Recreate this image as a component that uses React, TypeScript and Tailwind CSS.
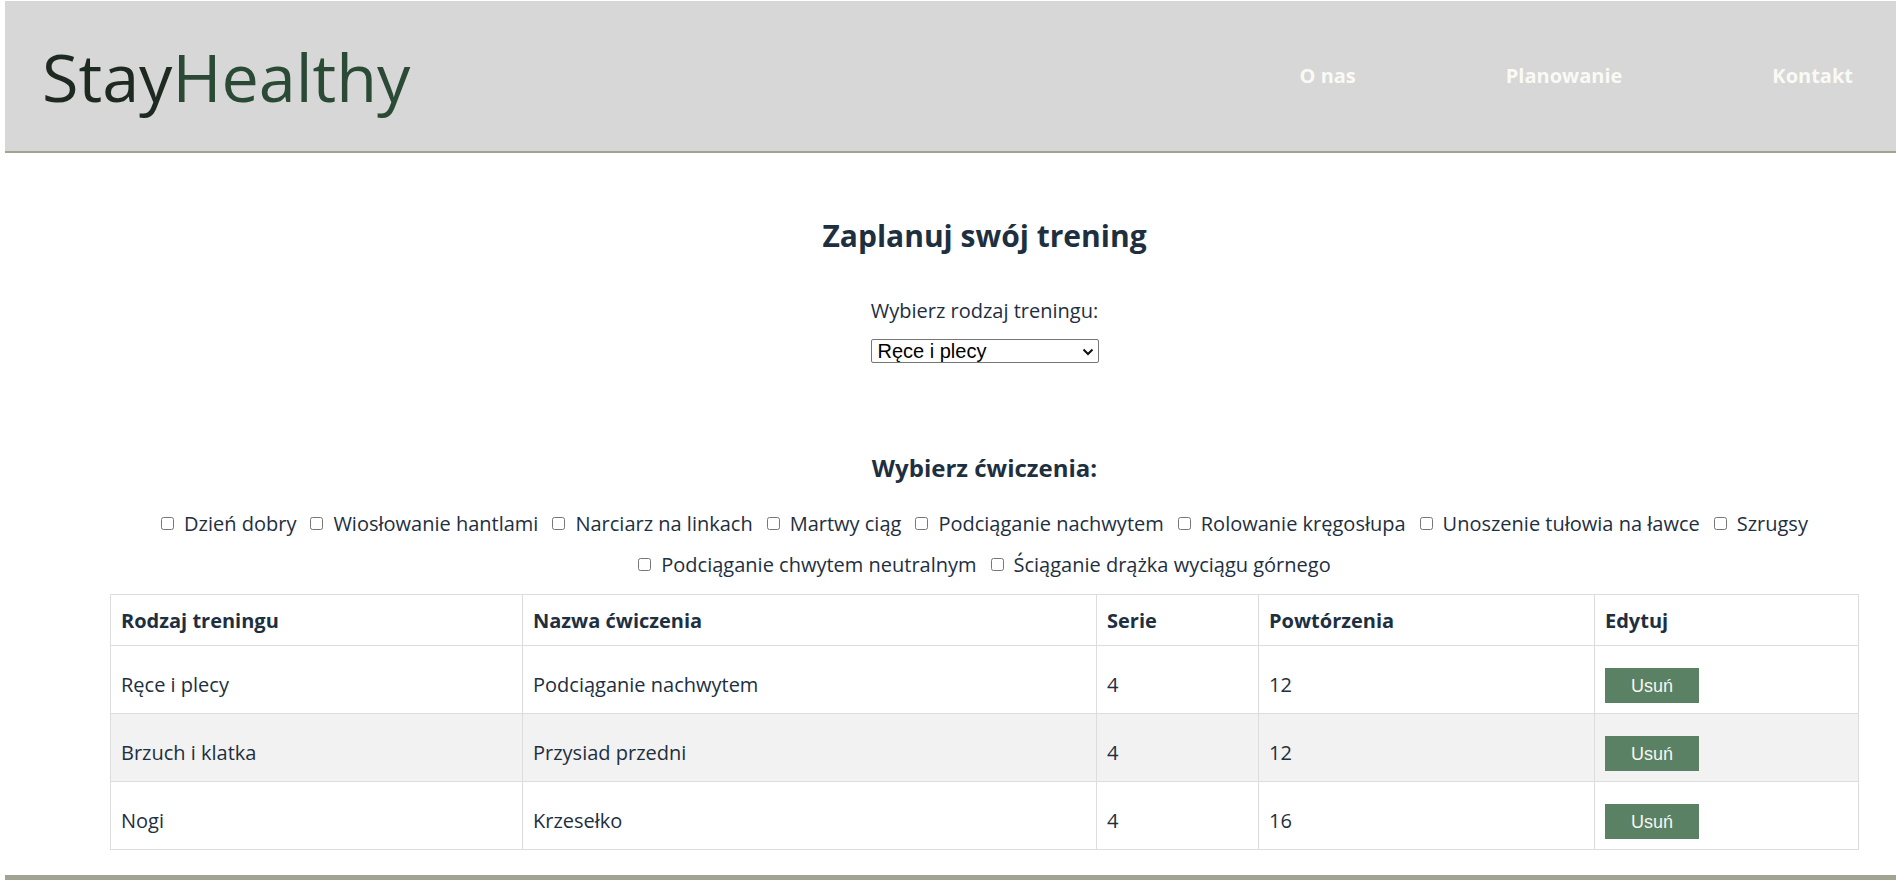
export default function App() {
  const exercises = [
    "Dzień dobry",
    "Wiosłowanie hantlami",
    "Narciarz na linkach",
    "Martwy ciąg",
    "Podciąganie nachwytem",
    "Rolowanie kręgosłupa",
    "Unoszenie tułowia na ławce",
    "Szrugsy",
    "Podciąganie chwytem neutralnym",
    "Ściąganie drążka wyciągu górnego",
  ];
  const rows = [
    { type: "Ręce i plecy", name: "Podciąganie nachwytem", sets: "4", reps: "12", bg: "bg-white" },
    { type: "Brzuch i klatka", name: "Przysiad przedni", sets: "4", reps: "12", bg: "bg-[#f2f2f2]" },
    { type: "Nogi", name: "Krzesełko", sets: "4", reps: "16", bg: "bg-white" },
  ];
  const td = "border border-[#dddddd] px-[10px] pt-[12px] pb-[10px] align-baseline text-[20px] leading-[27px] font-normal";
  const th = "border border-[#dddddd] px-[10px] py-[11.5px] text-left text-[20px] leading-[27px] font-bold";
  return (
    <div className="min-h-[880px] bg-white pl-[5px] pr-[2px] pt-[1px] font-['Open_Sans','Noto_Sans',sans-serif] text-[#1e2f3f]">
      <header className="flex h-[152px] items-center justify-between border-b-2 border-[#a1a493] bg-[#d7d7d7] pl-[37px] pr-[43px]">
        <div className="text-[66.5px] leading-[90px]">
          <span className="text-[#1e2a21]">Stay</span>
          <span className="text-[#2b4a36]">Healthy</span>
        </div>
        <nav className="flex gap-[150px] pb-[2px] text-[20px] font-bold leading-[27px] text-[#fafaf5]">
          <a href="#">O nas</a>
          <a href="#">Planowanie</a>
          <a href="#">Kontakt</a>
        </nav>
      </header>

      <main className="pl-[105px] pr-[37px]">
        <h2 className="mt-[62px] text-center text-[30px] font-bold leading-[41px]">Zaplanuj swój trening</h2>
        <p className="mt-[41px] text-center text-[20px] leading-[27px]">Wybierz rodzaj treningu:</p>
        <div className="mt-[15px] flex justify-center">
          <div className="relative h-[24px] w-[228px]">
            <select className="h-[24px] w-[228px] appearance-none rounded-[2px] border border-[#767676] bg-white pl-[6px] font-['Liberation_Sans',Arial,sans-serif] text-[20px] leading-[22px] text-black">
              <option>Ręce i plecy</option>
              <option>Brzuch i klatka</option>
              <option>Nogi</option>
            </select>
            <svg className="pointer-events-none absolute right-[5px] top-[9px]" width="12" height="8" viewBox="0 0 12 8">
              <path d="M1.5 1.5 L6 6 L10.5 1.5" fill="none" stroke="#111" strokeWidth="2" />
            </svg>
          </div>
        </div>

        <h3 className="mt-[88px] text-center text-[24px] font-bold leading-[33px]">Wybierz ćwiczenia:</h3>
        <div className="mt-[26px] flex flex-wrap justify-center gap-x-[14px] gap-y-[14px]">
          {exercises.map((e) => (
            <label key={e} className="inline-flex items-center text-[20px] leading-[27px]">
              <input type="checkbox" className="mr-[10px] h-[13px] w-[13px]" />
              {e}
            </label>
          ))}
        </div>

        <table className="mt-[16px] w-full table-fixed border-collapse">
          <colgroup>
            <col className="w-[412px]" />
            <col className="w-[574px]" />
            <col className="w-[162px]" />
            <col className="w-[336px]" />
            <col />
          </colgroup>
          <thead>
            <tr>
              <th className={th}>Rodzaj treningu</th>
              <th className={th}>Nazwa ćwiczenia</th>
              <th className={th}>Serie</th>
              <th className={th}>Powtórzenia</th>
              <th className={th}>Edytuj</th>
            </tr>
          </thead>
          <tbody>
            {rows.map((r) => (
              <tr key={r.type} className={r.bg}>
                <td className={td}>{r.type}</td>
                <td className={td}>{r.name}</td>
                <td className={td}>{r.sets}</td>
                <td className={td}>{r.reps}</td>
                <td className={td}>
                  <button className="mt-[10px] inline-block h-[35px] w-[94px] bg-[#5b8165] font-['Liberation_Sans',Arial,sans-serif] text-[18px] leading-[20px] text-[#f7f7f2]">
                    Usuń
                  </button>
                </td>
              </tr>
            ))}
          </tbody>
        </table>
      </main>
      <footer className="mt-[25px] h-[30px] bg-[#a1a493]" />
    </div>
  );
}
